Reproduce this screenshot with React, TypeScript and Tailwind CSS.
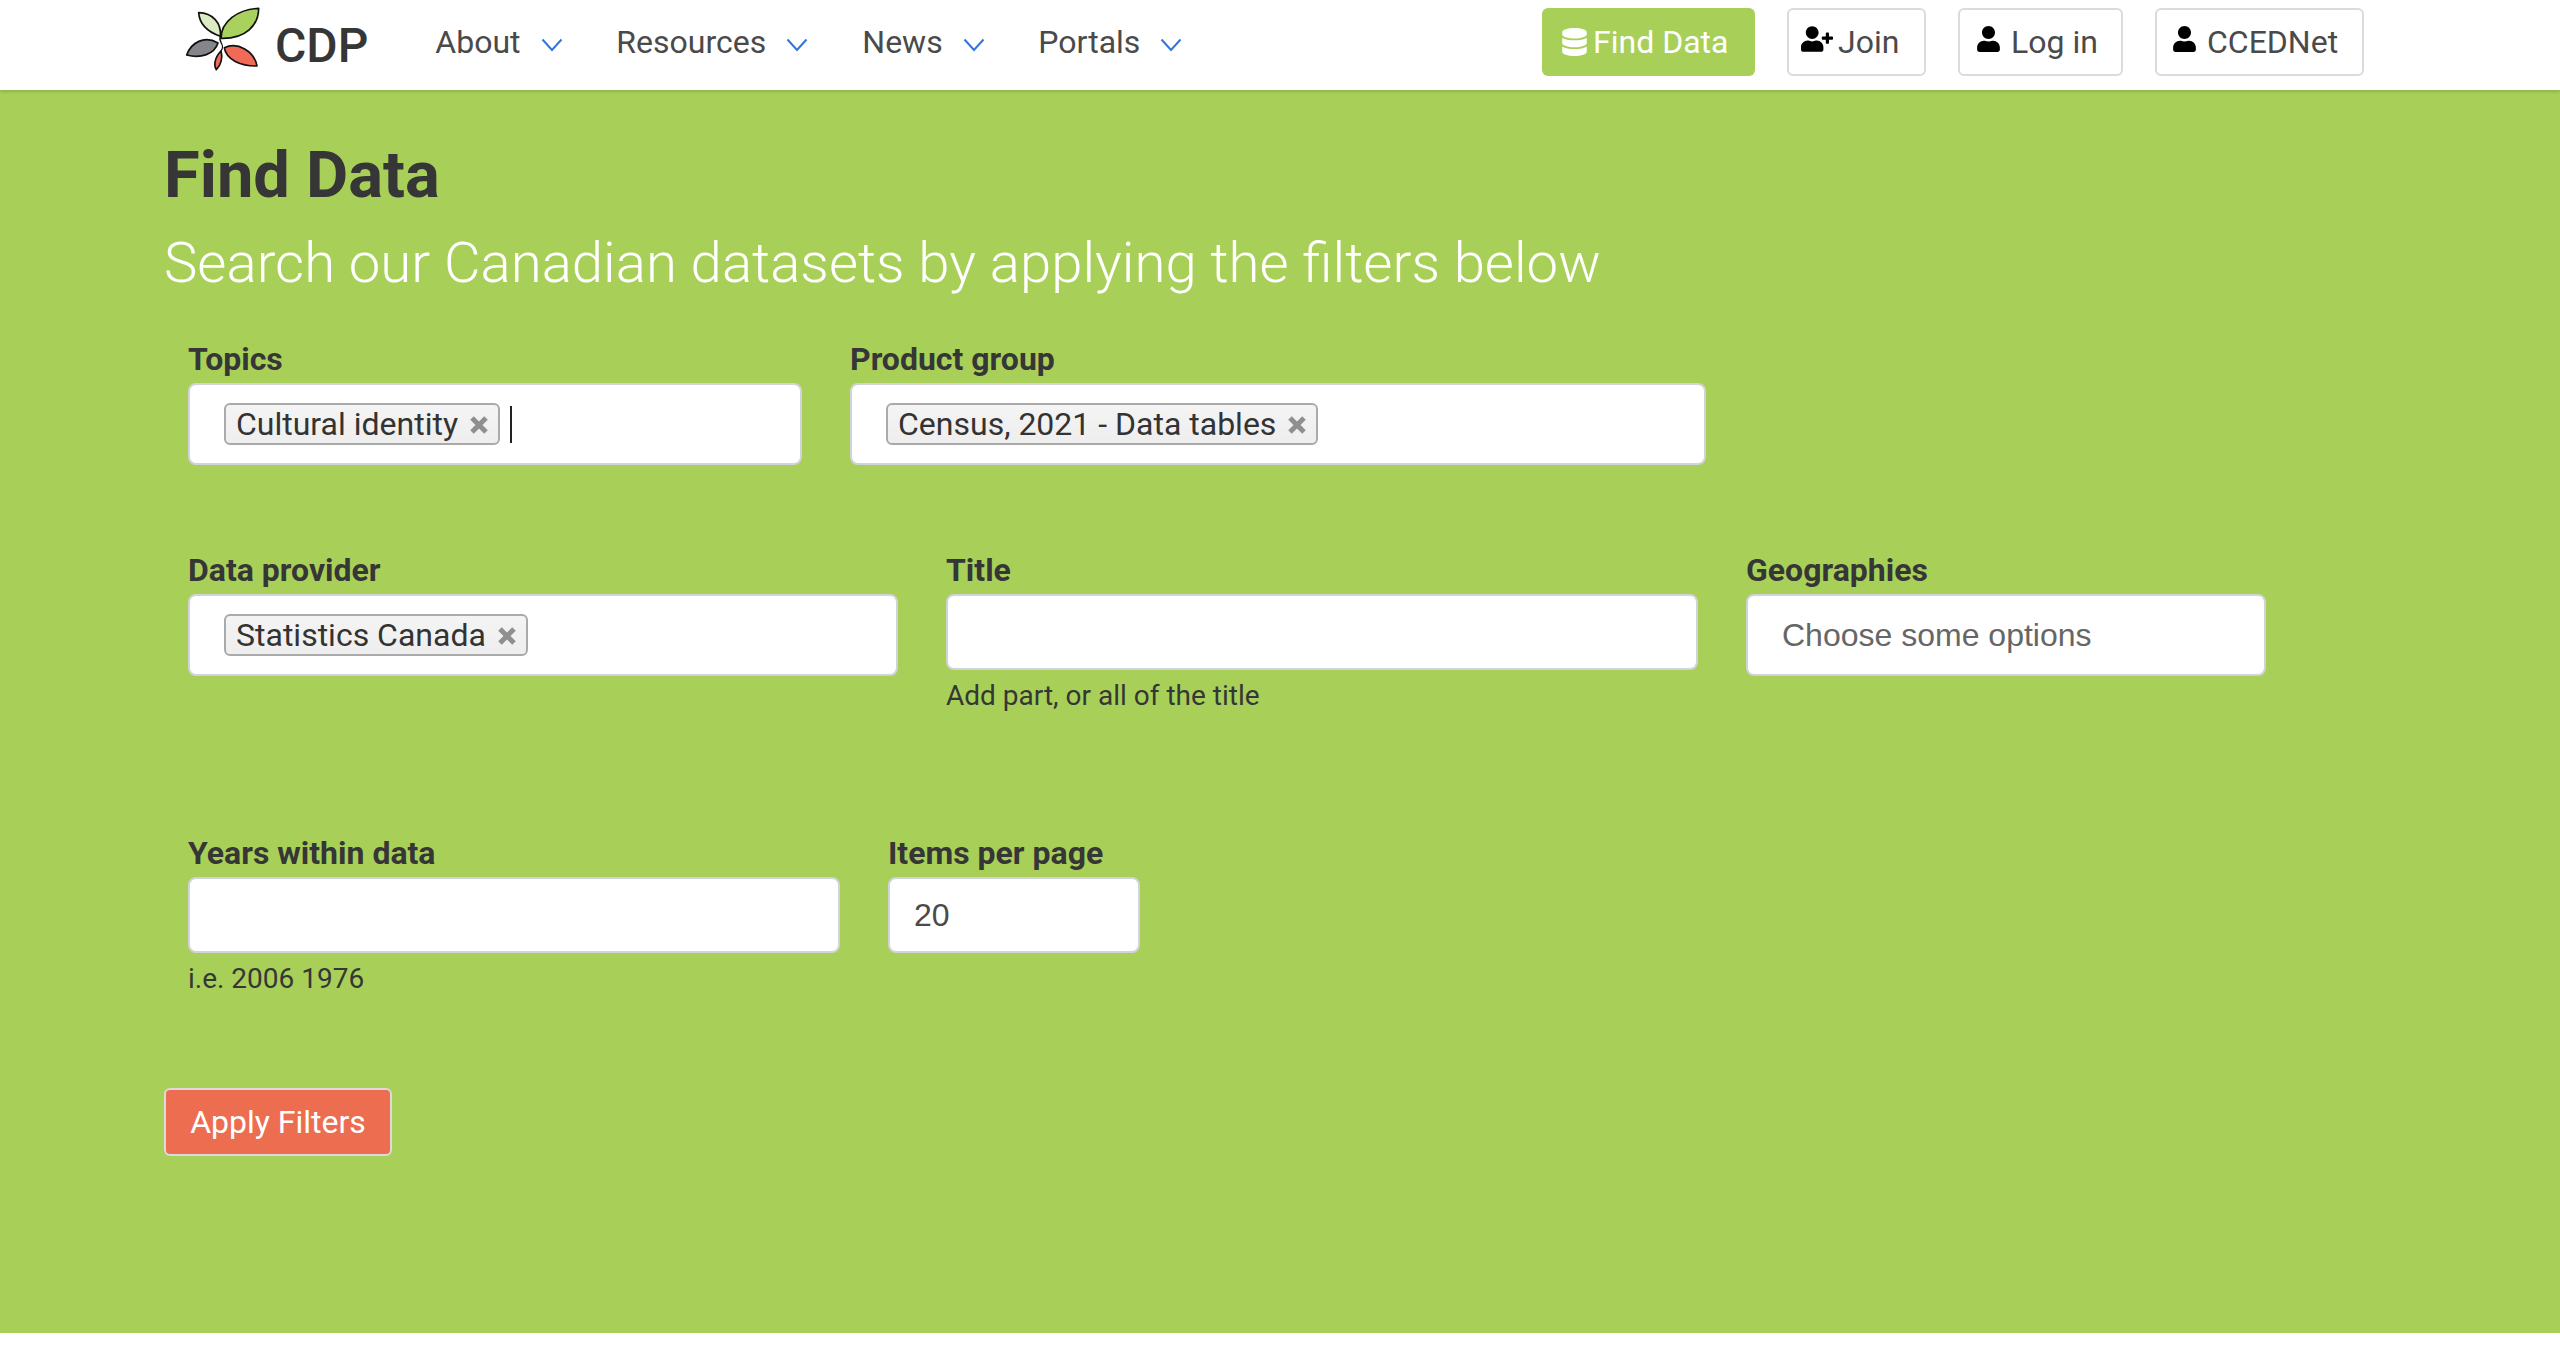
import React from "react";
import { FaDatabase, FaUser, FaUserPlus } from "react-icons/fa";

const Chevron = () => (
  <svg width="22" height="14" viewBox="0 0 22 14" className="ml-[20px] mt-[6px]" fill="none">
    <path d="M1.5 1.5 L11 12 L20.5 1.5" stroke="#3273dc" strokeWidth="2" />
  </svg>
);

const Logo = () => (
  <svg width="78" height="68" viewBox="42 12 234 204" fill="none" stroke="#111" strokeWidth="5" strokeLinejoin="round">
    <path d="M150 112 C150 62 200 25 263 22 C263 72 225 114 150 112Z" fill="#a8d15e" />
    <path d="M148 106 C108 92 85 66 83 35 C125 36 152 66 148 106Z" fill="#dcebc1" />
    <path d="M141 126 C100 102 60 125 47 162 C90 173 130 160 141 126Z" fill="#85868a" />
    <path d="M160 140 C200 122 250 150 258 195 C210 196 165 176 160 140Z" fill="#ef6b57" />
    <path d="M150 150 C130 170 128 195 136 206 C150 192 156 170 150 150Z" fill="#ef6b57" />
    <path d="M148 106 C140 125 165 130 150 150" strokeWidth="4" />
  </svg>
);

const NavItem = ({ label, className }: { label: string; className: string }) => (
  <div className={`flex items-center ${className}`}>
    <span>{label}</span>
    <Chevron />
  </div>
);

const NavButton = ({ icon, label, className }: { icon: React.ReactNode; label: string; className: string }) => (
  <div className={`flex h-[68px] items-center justify-start rounded-[6px] border-2 border-[#dbdbdb] bg-white text-[#4a4a4a] ${className}`}>
    <span className="mt-[-7px] text-black">{icon}</span>
    {label}
  </div>
);

const Tag = ({ label }: { label: string }) => (
  <span className="flex h-[42px] items-center rounded-[6px] border-2 border-[#aaaaaa] bg-gradient-to-b from-[#f4f4f4] to-[#eeeeee] pl-[10px] pr-[9px] text-[32px] leading-none text-[#333333]">
    {label}
    <svg width="20" height="20" viewBox="0 0 20 20" className="ml-[11px] mt-[2px]">
      <path d="M3 3 L17 17 M17 3 L3 17" stroke="#8f8f8f" strokeWidth="5" />
    </svg>
  </span>
);

const Label = ({ children }: { children: React.ReactNode }) => (
  <div className="mb-[8px] h-[32px] text-[32px] font-bold leading-[32px] text-[#363636]">{children}</div>
);

const Box = ({ className, children }: { className: string; children?: React.ReactNode }) => (
  <div className={`flex items-center rounded-[8px] border-2 border-[#d0d4da] bg-white ${className}`}>{children}</div>
);

const Help = ({ children }: { children: React.ReactNode }) => (
  <div className="mt-[10px] text-[28px] leading-[32px] text-[#363636]">{children}</div>
);

export default function App() {
  return (
    <div className="flex min-h-[1360px] flex-col bg-white font-['Roboto',sans-serif]">
      <header className="relative z-10 flex h-[90px] items-start bg-white pl-[185px] text-[32px] text-[#4a4a4a] shadow-[0_2px_3px_rgba(0,0,0,0.15)]">
        <div className="mt-[5px] flex items-start">
          <Logo />
          <span className="ml-[12px] mt-[12px] text-[48px] font-medium leading-[58px] text-[#363636]">CDP</span>
        </div>
        <div className="ml-[67px] mt-[18px] flex">
          <NavItem label="About" className="w-[181px]" />
          <NavItem label="Resources" className="w-[246px]" />
          <NavItem label="News" className="w-[176px]" />
          <NavItem label="Portals" />
        </div>
        <div className="ml-auto mr-[196px] mt-[8px] flex gap-[32px]">
          <div className="flex h-[68px] w-[213px] items-center justify-start rounded-[6px] bg-[#a8d059] pl-[20px] text-white">
            <FaDatabase className="mr-[6px] h-[28px] w-[25px]" />
            Find Data
          </div>
          <NavButton className="w-[139px] gap-[5px] pl-[12px]" icon={<FaUserPlus className="h-[26px] w-[32px]" />} label="Join" />
          <NavButton className="w-[165px] gap-[11px] pl-[17px]" icon={<FaUser className="h-[26px] w-[23px]" />} label="Log in" />
          <NavButton className="w-[209px] gap-[11px] pl-[16px]" icon={<FaUser className="h-[26px] w-[23px]" />} label="CCEDNet" />
        </div>
      </header>

      <main className="h-[1243px] bg-[#a8d059] pl-[164px] pt-[49px]">
        <h1 className="text-[65px] font-bold leading-[72px] text-[#363636]">Find Data</h1>
        <p className="mt-[22px] text-[56.3px] font-light leading-[60px] text-white">Search our Canadian datasets by applying the filters below</p>

        <div className="ml-[24px] mt-[50px] flex gap-[48px]">
          <div>
            <Label>Topics</Label>
            <Box className="h-[82px] w-[614px] pl-[34px]">
              <Tag label="Cultural identity" />
              <span className="ml-[10px] h-[37px] w-[2px] bg-[#222222]" />
            </Box>
          </div>
          <div>
            <Label>Product group</Label>
            <Box className="h-[82px] w-[856px] pl-[34px]">
              <Tag label="Census, 2021 - Data tables" />
            </Box>
          </div>
        </div>

        <div className="ml-[24px] mt-[89px] flex gap-[48px]">
          <div>
            <Label>Data provider</Label>
            <Box className="h-[82px] w-[710px] pl-[34px]">
              <Tag label="Statistics Canada" />
            </Box>
          </div>
          <div>
            <Label>Title</Label>
            <Box className="h-[76px] w-[752px]" />
            <Help>Add part, or all of the title</Help>
          </div>
          <div>
            <Label>Geographies</Label>
            <Box className="h-[82px] w-[520px] pl-[34px] font-['Liberation_Sans',sans-serif] text-[32px] text-[#666666]">Choose some options</Box>
          </div>
        </div>

        <div className="ml-[24px] mt-[125px] flex gap-[48px]">
          <div>
            <Label>Years within data</Label>
            <Box className="h-[76px] w-[652px]" />
            <Help>i.e. 2006 1976</Help>
          </div>
          <div>
            <Label>Items per page</Label>
            <Box className="h-[76px] w-[252px] pl-[24px] font-['Liberation_Sans',sans-serif] text-[32px] text-[#4a4a4a]">20</Box>
          </div>
        </div>

        <button className="mt-[93px] flex h-[68px] w-[228px] items-center justify-center rounded-[6px] border-2 border-[#dbdbdb] bg-[#ec6d50] text-[32px] text-white">
          Apply Filters
        </button>
      </main>
    </div>
  );
}
